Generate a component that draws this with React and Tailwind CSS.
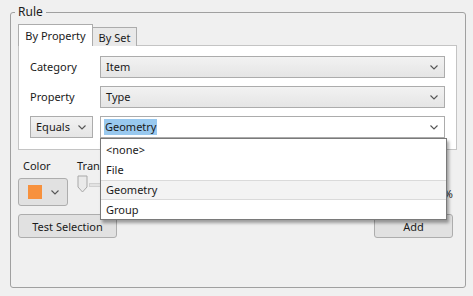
import React from "react";

const Chevron = ({ className = "" }) => (
  <svg width="8" height="5" viewBox="0 0 8 5" className={className}>
    <path d="M0.5 0.5 L4 4 L7.5 0.5" fill="none" stroke="#555" strokeWidth="1.1" />
  </svg>
);

const Combo = ({ text, className = "" }) => (
  <div
    className={`h-[22px] border border-[#acacac] bg-gradient-to-b from-[#f2f2f2] to-[#e5e5e5] flex items-center justify-between pl-[5px] pr-[6px] ${className}`}
  >
    <span>{text}</span>
    <Chevron />
  </div>
);

export default function App() {
  return (
    <div
      className="w-[473px] h-[296px] bg-[#f0f0f0] text-[11px] text-[#1a1a1a] pt-[12px] pl-[10px] overflow-hidden"
      style={{ fontFamily: '"Noto Sans", "Open Sans", sans-serif' }}
    >
      <div className="relative w-[456px] h-[276px] border border-[#a0a0a0] rounded-[3px] pl-[7px] pt-[11px] pr-[7px]">
        <span className="absolute -top-[9px] left-[4px] px-[3px] bg-[#f0f0f0] leading-[16px] text-[12px]">Rule</span>

        {/* tabs */}
        <div className="flex items-end h-[22px] relative z-10">
          <div className="h-[22px] w-[75px] border border-b-0 border-[#acacac] bg-white flex items-center justify-center leading-none pb-[1px]">
            By Property
          </div>
          <div className="h-[19px] w-[44px] border border-l-0 border-b-0 border-[#acacac] bg-[#e9e9e9] flex items-center justify-center leading-none">
            By Set
          </div>
        </div>
        <div className="w-[439px] h-[105px] -mt-[1px] border border-[#c4c4c4] bg-white pt-[10px] pl-[11px] pr-[11px] flex flex-col gap-[8px]">
          <div className="flex items-center">
            <span className="w-[70px]">Category</span>
            <Combo text="Item" className="flex-1" />
          </div>
          <div className="flex items-center">
            <span className="w-[70px]">Property</span>
            <Combo text="Type" className="flex-1" />
          </div>
          <div className="flex items-center">
            <Combo text="Equals" className="w-[63px] mr-[7px]" />
            <div className="relative flex-1 h-[22px] border border-[#acacac] bg-white flex items-center justify-between pl-[3px] pr-[6px]">
              <span className="bg-[#99c9ef] px-[1px] leading-[16px]">Geometry</span>
              <Chevron />
              <div className="absolute left-[-1px] top-[21px] w-[347px] h-[82px] bg-white border border-[#7a7a7a] shadow-[2px_3px_3px_rgba(0,0,0,0.35)] z-20 pt-[1px]">
                {["<none>", "File", "Geometry", "Group"].map((t) => (
                  <div
                    key={t}
                    className={`h-[20px] flex items-center pl-[5px] ${
                      t === "Geometry" ? "bg-[#f3f3f3] border-y border-[#dadada]" : ""
                    }`}
                  >
                    {t}
                  </div>
                ))}
              </div>
            </div>
          </div>
        </div>

        {/* color / transparency */}
        <div className="flex mt-[8px] relative">
          <div className="flex flex-col w-[59px]">
            <span className="pl-[5px] leading-[16px]">Color</span>
            <div className="mt-[4px] w-[50px] h-[28px] border border-[#adadad] rounded-[3px] bg-[#e1e1e1] flex items-center pl-[9px] gap-[9px]">
              <div className="w-[14px] h-[14px] bg-[#f7913d]" />
              <Chevron />
            </div>
          </div>
          <div className="flex-1 flex flex-col">
            <span className="leading-[16px]">Transparency</span>
            <div className="flex items-center h-[32px] relative">
              <svg width="12" height="20" viewBox="0 0 12 20" className="-mt-[10px]">
                <path d="M1 1 H10 V12 L5.5 17 L1 12 Z" fill="#eaeaea" stroke="#a8a8a8" strokeWidth="1" />
              </svg>
              <div className="flex-1 h-[4px] bg-[#e2e2e2] border border-[#d0d0d0] -mt-[10px]" />
              <span className="ml-[2px] mr-[5px] mt-[8px]">%</span>
            </div>
          </div>
        </div>

        {/* buttons */}
        <div className="flex justify-between mt-[8px] pr-[5px]">
          <button className="w-[99px] h-[24px] border border-[#adadad] rounded-[3px] bg-[#e1e1e1] leading-none">
            Test Selection
          </button>
          <button className="w-[79px] h-[24px] border border-[#adadad] rounded-[3px] bg-[#e1e1e1] leading-none">
            Add
          </button>
        </div>
      </div>
    </div>
  );
}
